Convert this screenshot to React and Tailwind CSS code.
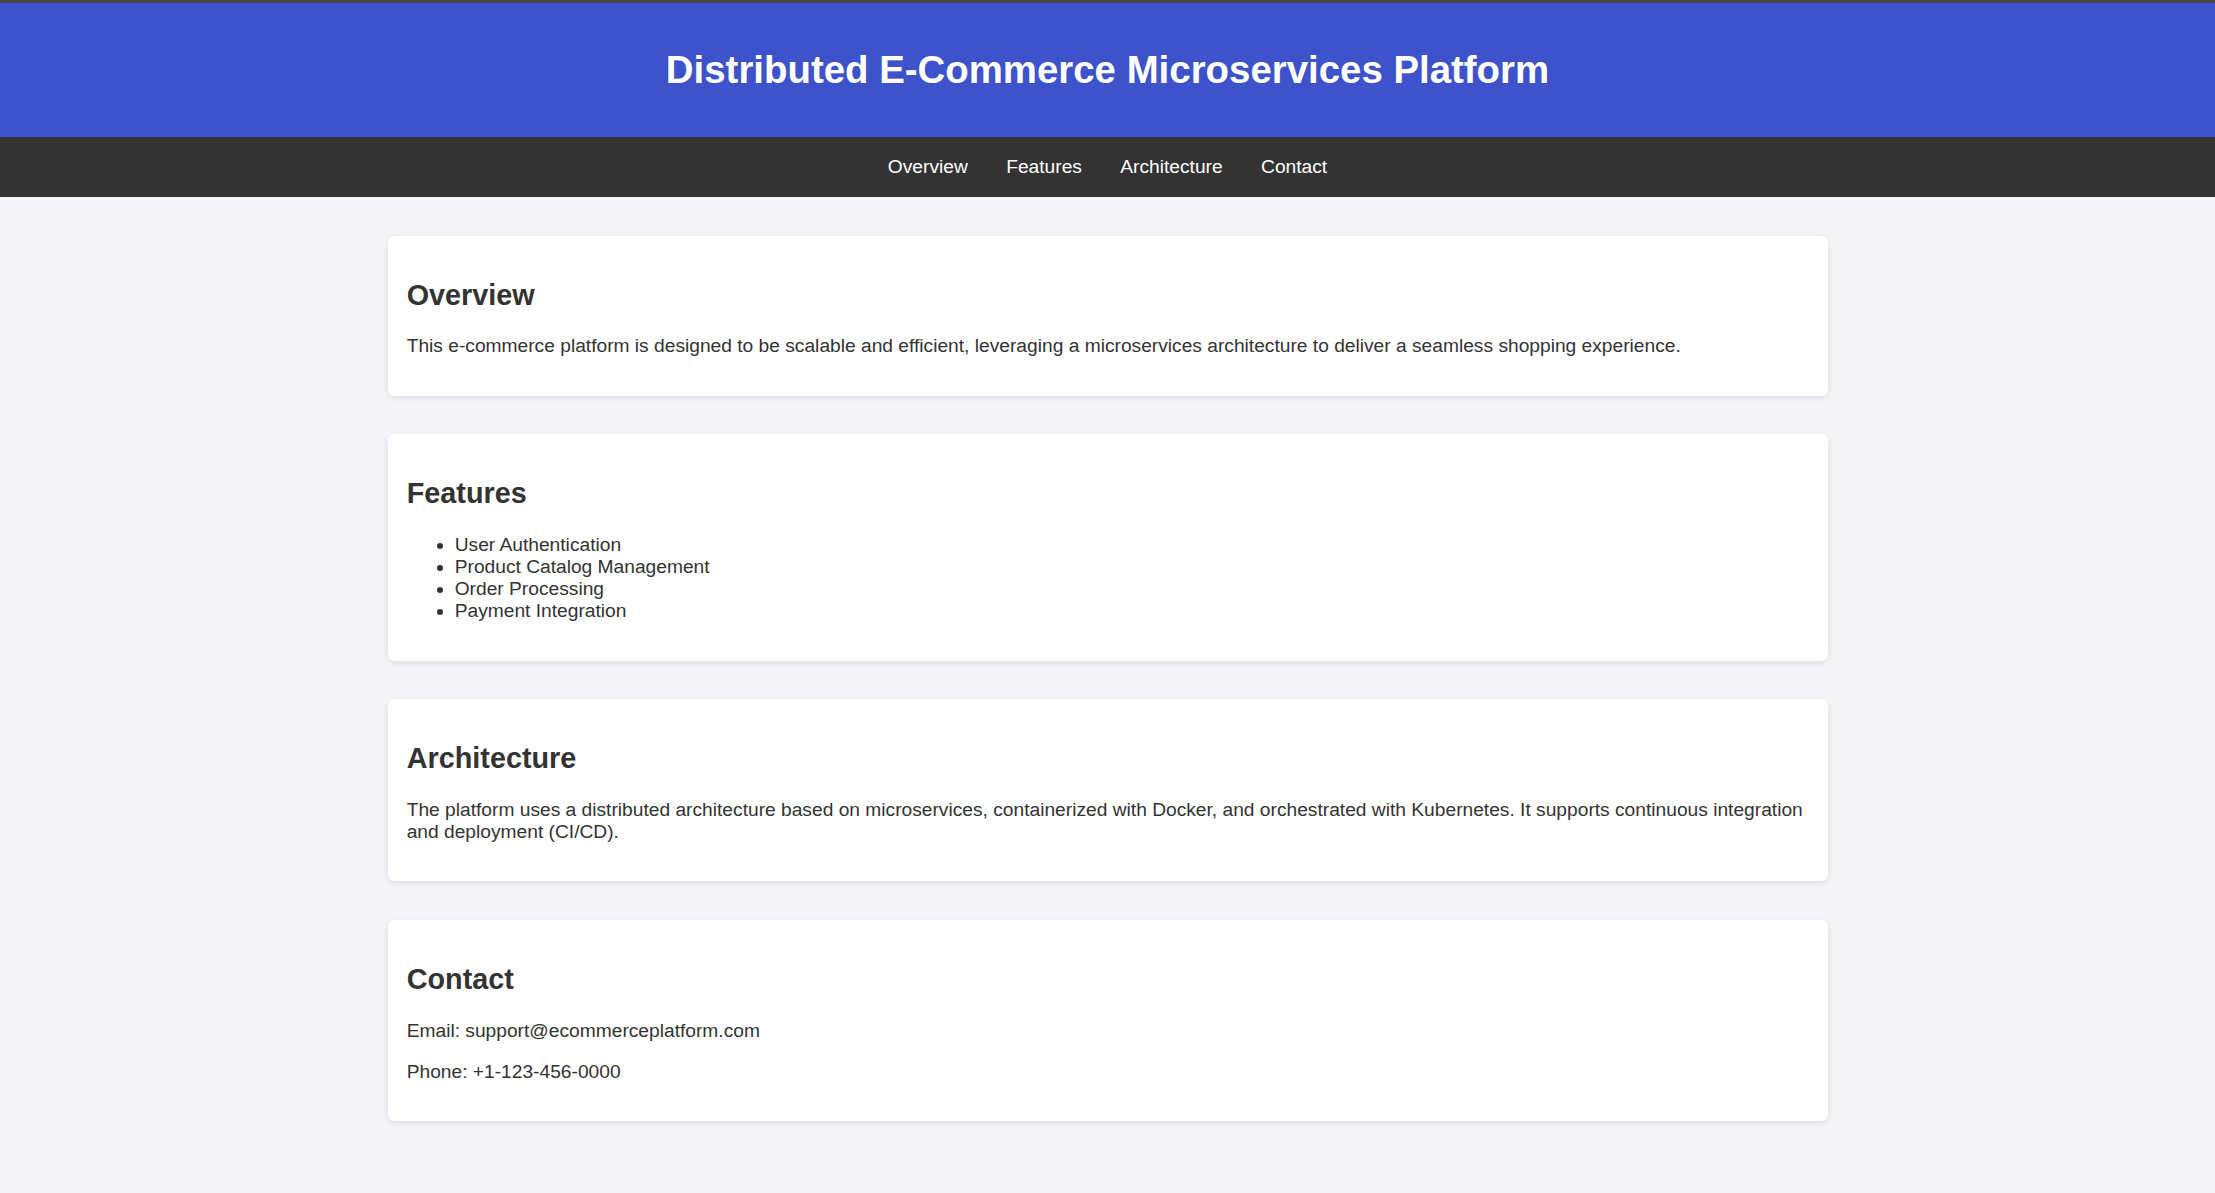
export default function App() {
  const sections = [
    {
      title: "Overview",
      body: (
        <p className="my-[19.2px]">
          This e-commerce platform is designed to be scalable and efficient, leveraging a microservices architecture to deliver a seamless shopping experience.
        </p>
      ),
    },
    {
      title: "Features",
      body: (
        <ul className="my-[19.2px] pl-[48px] list-disc">
          <li>User Authentication</li>
          <li>Product Catalog Management</li>
          <li>Order Processing</li>
          <li>Payment Integration</li>
        </ul>
      ),
    },
    {
      title: "Architecture",
      body: (
        <p className="my-[19.2px]">
          The platform uses a distributed architecture based on microservices, containerized with Docker, and orchestrated with Kubernetes. It supports continuous integration and deployment (CI/CD).
        </p>
      ),
    },
    {
      title: "Contact",
      body: (
        <>
          <p className="my-[19.2px]">Email: support@ecommerceplatform.com</p>
          <p className="my-[19.2px]">Phone: +1-123-456-0000</p>
        </>
      ),
    },
  ];

  return (
    <div
      className="min-h-screen bg-[#f4f4f9] text-[#333] text-[19.2px] leading-[normal]"
      style={{ fontFamily: '"Liberation Sans", Arial, sans-serif' }}
    >
      <div className="h-[3px] bg-[#454545]" />
      <header className="bg-[#3d52cb] text-white text-center py-[19.2px]">
        <h1 className="my-[25.7px] text-[38.4px] font-bold leading-[normal]">
          Distributed E-Commerce Microservices Platform
        </h1>
      </header>
      <nav className="bg-[#333] flex justify-center py-[19.2px]">
        {["Overview", "Features", "Architecture", "Contact"].map((l) => (
          <a key={l} href={"#" + l.toLowerCase()} className="text-white mx-[19.2px]">
            {l}
          </a>
        ))}
      </nav>
      <main className="w-[1440px] mx-auto pt-[38.4px] pb-[38.4px] flex flex-col gap-[38.4px]">
        {sections.map((s) => (
          <section
            key={s.title}
            id={s.title.toLowerCase()}
            className="bg-white rounded-[6px] p-[19.2px] shadow-[0_2px_6px_rgba(0,0,0,0.1)] flow-root"
          >
            <h2 className="my-[23.9px] text-[28.8px] font-bold leading-[normal]">{s.title}</h2>
            {s.body}
          </section>
        ))}
      </main>
    </div>
  );
}
